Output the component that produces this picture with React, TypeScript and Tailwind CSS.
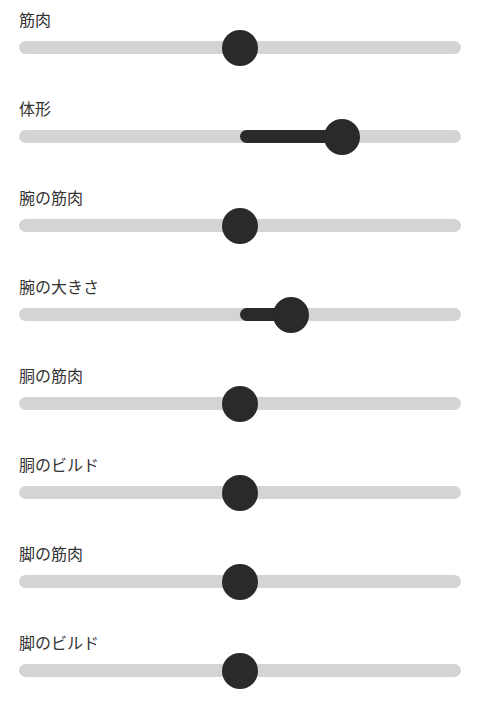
import React, { useState } from "react";

type Row = { label: string; value: number };

const initial: Row[] = [
  { label: "筋肉", value: 0 },
  { label: "体形", value: 0.5 },
  { label: "腕の筋肉", value: 0 },
  { label: "腕の大きさ", value: 0.25 },
  { label: "胴の筋肉", value: 0 },
  { label: "胴のビルド", value: 0 },
  { label: "脚の筋肉", value: 0 },
  { label: "脚のビルド", value: 0 },
];

function Slider({ value }: { value: number }) {
  // value は -1 .. 1、中央が 0
  const t = (value + 1) / 2;
  const center = `calc(18px + ${t} * (100% - 36px))`;
  const left = value >= 0 ? "50%" : center;
  const width =
    value >= 0
      ? `calc(${center} - 50%)`
      : `calc(50% - ${center})`;

  return (
    <div className="relative h-9 w-full">
      <div className="absolute left-0 right-0 top-[11px] h-[13px] rounded-full bg-[#d4d4d4]" />
      {value !== 0 && (
        <div
          className="absolute top-[11px] h-[13px] rounded-full bg-[#2a2a2a]"
          style={{ left, width }}
        />
      )}
      <div
        className="absolute top-0 h-9 w-9 -translate-x-1/2 rounded-full bg-[#2a2a2a]"
        style={{ left: center }}
      />
    </div>
  );
}

export default function App() {
  const [rows] = useState(initial);

  return (
    <div
      className="min-h-screen bg-white px-[19px] pt-[9px]"
      style={{ fontFamily: '"Noto Sans CJK JP", "Noto Sans", sans-serif' }}
    >
      {rows.map((r) => (
        <div key={r.label} className="mb-8 flex flex-col">
          <div className="text-[16px] leading-[21px] text-[#333333]">{r.label}</div>
          <Slider value={r.value} />
        </div>
      ))}
    </div>
  );
}
